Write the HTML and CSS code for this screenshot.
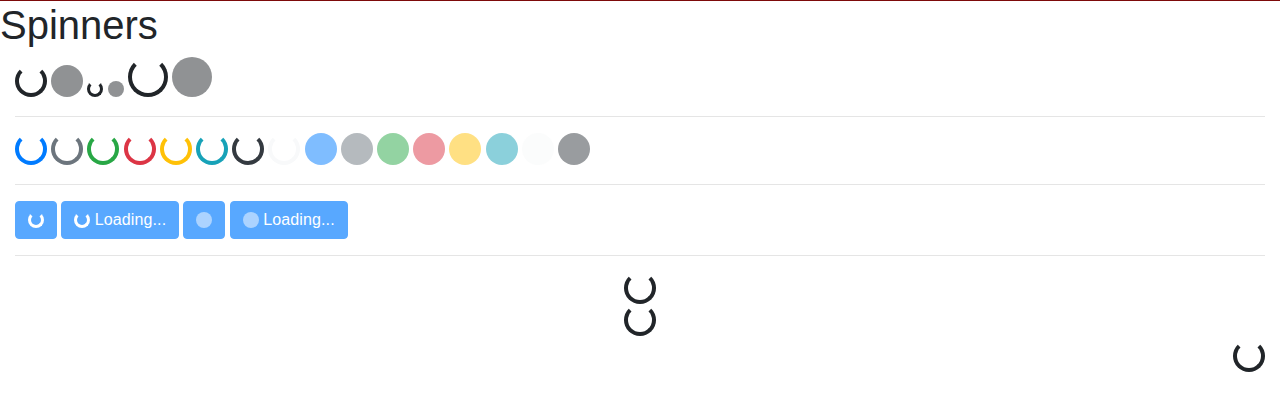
FILE: index.html
```html
<!DOCTYPE html>
<html>
<head>
<meta charset="utf-8">
<link rel="stylesheet" href="styles.css">
</head>
<body>
<h1 class="title">Spinners</h1>
<div class="container">
  <div class="row-line tight">
    <div class="spinner-border"></div>
    <div class="spinner-grow"></div>
    <div class="spinner-border spinner-sm"></div>
    <div class="spinner-grow spinner-grow-sm"></div>
    <div class="spinner-border spinner-lg"></div>
    <div class="spinner-grow spinner-lg"></div>
  </div>
  <hr class="sep">
  <div class="row-line tight">
    <div class="spinner-border c-primary"></div>
    <div class="spinner-border c-secondary"></div>
    <div class="spinner-border c-success"></div>
    <div class="spinner-border c-danger"></div>
    <div class="spinner-border c-warning"></div>
    <div class="spinner-border c-info"></div>
    <div class="spinner-border c-dark"></div>
    <div class="spinner-border c-light"></div>
    <div class="spinner-grow c-primary"></div>
    <div class="spinner-grow c-secondary"></div>
    <div class="spinner-grow c-success"></div>
    <div class="spinner-grow c-danger"></div>
    <div class="spinner-grow c-warning"></div>
    <div class="spinner-grow c-info"></div>
    <div class="spinner-grow c-light"></div>
    <div class="spinner-grow c-dark"></div>
  </div>
  <hr class="sep">
  <div class="btn-row">
    <button class="btn" disabled><span class="spinner-border spinner-sm c-white"></span></button>
    <button class="btn" disabled><span class="spinner-border spinner-sm c-white"></span> Loading...</button>
    <button class="btn" disabled><span class="spinner-grow spinner-grow-sm c-white"></span></button>
    <button class="btn" disabled><span class="spinner-grow spinner-grow-sm c-white"></span> Loading...</button>
  </div>
  <hr class="sep">
  <div class="flex-center">
    <div class="spinner-border"></div>
  </div>
  <div class="text-center">
    <div class="spinner-border"></div>
  </div>
  <div class="clearfix">
    <div class="spinner-border float-right"></div>
  </div>
</div>
</body>
</html>
```
FILE: styles.css
```css
html, body {
  margin: 0;
  padding: 0;
}
body {
  border-top: 1px solid #7d0a0a;
  font-family: "Liberation Sans", Arial, sans-serif;
  font-size: 16px;
  line-height: 1.5;
  color: #212529;
  background: #fff;
}
.title {
  margin: 0 0 8px 0;
  font-size: 40px;
  font-weight: 400;
  line-height: 1.2;
}
.container {
  padding: 0 15px;
}
.row-line {
  word-spacing: -0.25px;
}
.row-line.tight {
  line-height: 22px;
}
.btn-row {
  word-spacing: -0.25px;
}
.sep {
  margin: 16px 0;
  border: 0;
  border-top: 1px solid rgba(0, 0, 0, 0.1);
  height: 0;
}
.spinner-border {
  display: inline-block;
  box-sizing: border-box;
  width: 32px;
  height: 32px;
  vertical-align: text-bottom;
  border: 4px solid currentColor;
  border-right-color: transparent;
  border-radius: 50%;
  transform: rotate(-90deg);
}
.spinner-sm {
  width: 16px;
  height: 16px;
  border-width: 3px;
}
.spinner-grow {
  display: inline-block;
  width: 32px;
  height: 32px;
  vertical-align: text-bottom;
  background-color: currentColor;
  border-radius: 50%;
  opacity: 0.5;
}
.spinner-grow-sm {
  width: 16px;
  height: 16px;
}
.spinner-lg {
  width: 40px;
  height: 40px;
}
.c-primary { color: #007bff; }
.c-secondary { color: #6c757d; }
.c-success { color: #28a745; }
.c-danger { color: #dc3545; }
.c-warning { color: #ffc107; }
.c-info { color: #17a2b8; }
.c-dark { color: #343a40; }
.c-light { color: #f8f9fa; }
.c-white { color: #fff; }
.btn {
  display: inline-block;
  font-family: inherit;
  font-size: 16px;
  line-height: 1.5;
  font-weight: 400;
  word-spacing: normal;
  letter-spacing: 0.12px;
  color: #fff;
  background-color: #007bff;
  border: 1px solid #007bff;
  border-radius: 4px;
  padding: 6px 12px;
  margin: 0;
  opacity: 0.65;
  vertical-align: middle;
}
.flex-center {
  display: flex;
  justify-content: center;
}
.text-center {
  text-align: center;
}
.clearfix::after {
  content: "";
  display: block;
  clear: both;
}
.float-right {
  float: right;
}
```
